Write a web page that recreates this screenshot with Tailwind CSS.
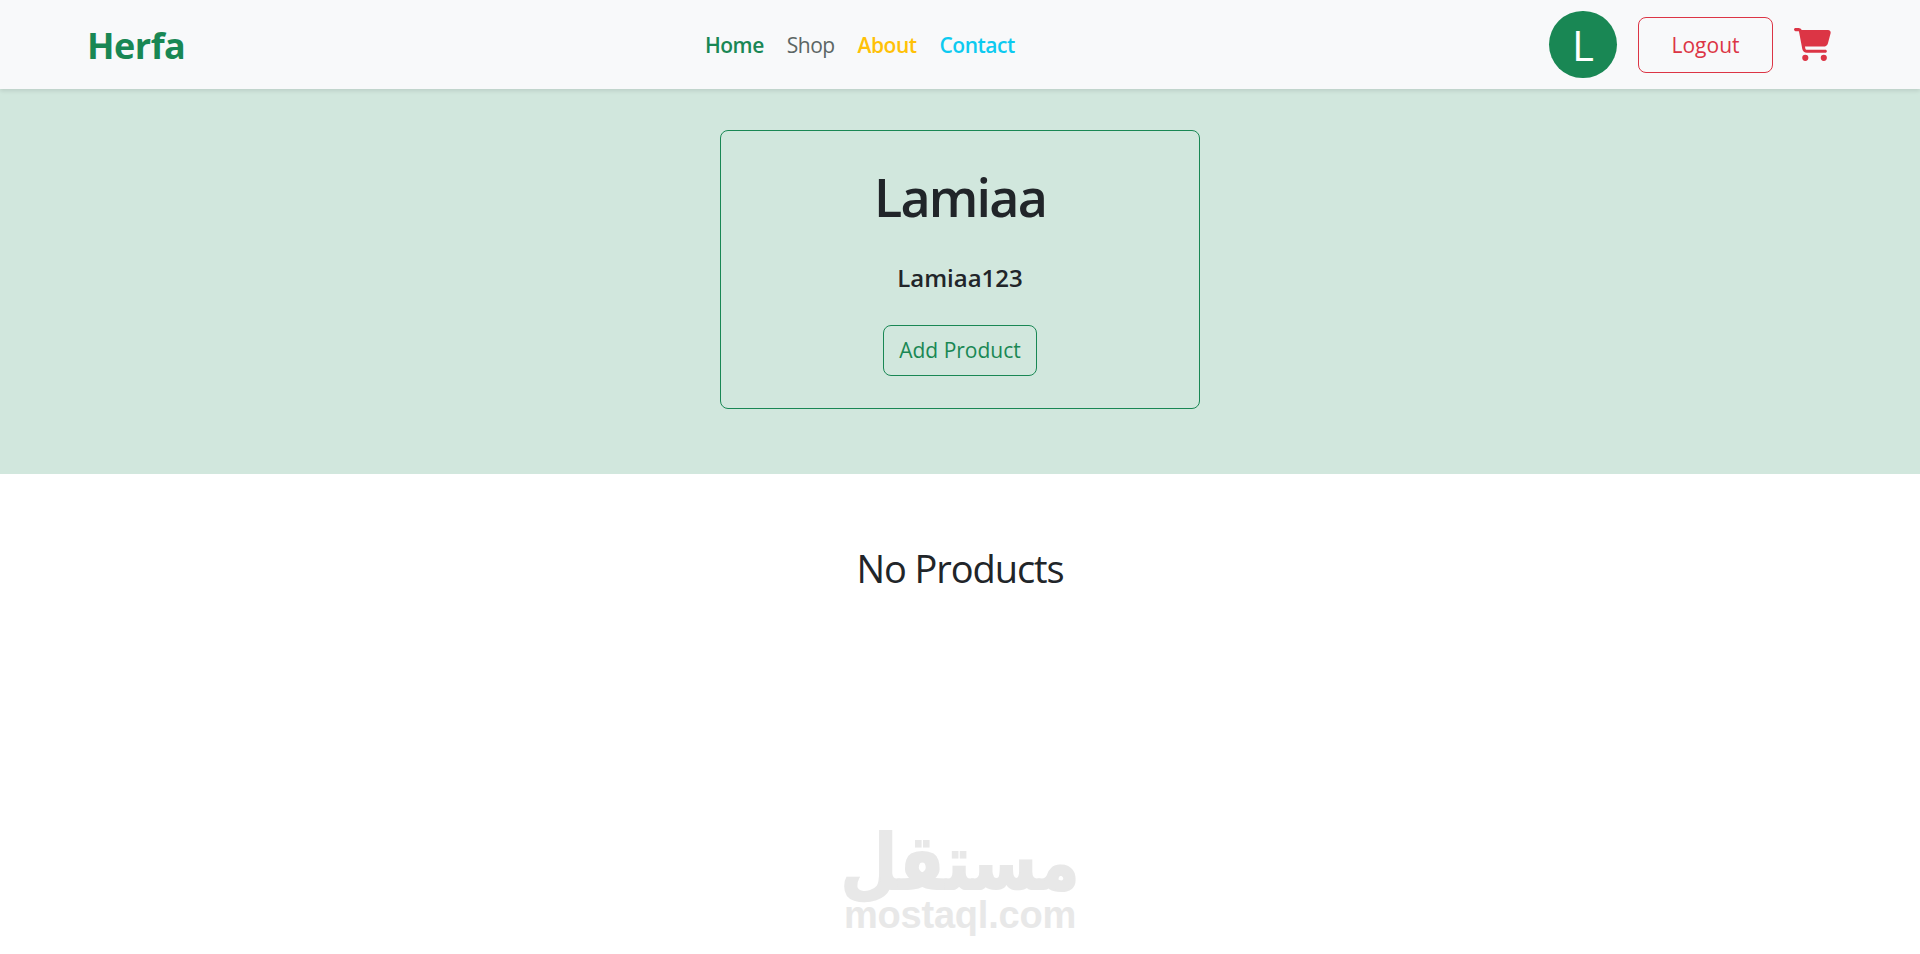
<!DOCTYPE html>
<html lang="en">
<head>
    <meta charset="UTF-8">
    <meta name="viewport" content="width=device-width, initial-scale=1.0">
    <title>Herfa</title>
    <script src="https://cdn.jsdelivr.net/npm/@tailwindcss/browser@4"></script>
</head>
<body class="bg-white font-['Open_Sans',sans-serif] text-[#212529] h-[954px] overflow-hidden relative">

    <!-- Navbar -->
    <nav class="relative z-10 flex items-center h-[89px] pl-[87px] pr-[89px] bg-[#f8f9fa] shadow-[0_2px_4px_rgba(0,0,0,0.1)]">
        <a href="#" class="w-[98px] pt-[3px] text-[36px] font-bold text-[#198754] tracking-[-0.5px]">Herfa</a>
        <div class="flex items-center gap-[23px] ml-[520px] pt-[3px] text-[21px] font-semibold tracking-[-0.5px]">
            <a href="#" class="text-[#198754]">Home</a>
            <a href="#" class="text-[#5c6664] font-medium">Shop</a>
            <a href="#" class="text-[#ffc107]">About</a>
            <a href="#" class="text-[#0dcaf0]">Contact</a>
        </div>
        <div class="flex items-center ml-auto">
            <div class="flex items-center justify-center w-[68px] h-[67px] rounded-full bg-[#198754] text-white text-[42px]">L</div>
            <button class="w-[135px] h-[56px] ml-[21px] pt-[2px] border border-[#dc3545] rounded-lg text-[#dc3545] text-[21px]">Logout</button>
            <svg class="w-[37px] h-[33px] ml-[21px] fill-[#dc3545]" viewBox="0 0 576 512"><path d="M0 24C0 10.7 10.7 0 24 0H69.5c22 0 41.5 12.8 50.6 32h411c26.3 0 45.5 25 38.6 50.4l-41 152.3c-8.5 31.4-37 53.3-69.5 53.3H170.7l5.4 28.5c2.2 11.3 12.1 19.5 23.6 19.5H488c13.3 0 24 10.7 24 24s-10.7 24-24 24H199.7c-34.6 0-64.3-24.6-70.7-58.5L77.4 54.5c-.7-3.8-4-6.5-7.9-6.5H24C10.7 48 0 37.3 0 24zM128 464a48 48 0 1 1 96 0 48 48 0 1 1 -96 0zm336-48a48 48 0 1 1 0 96 48 48 0 1 1 0-96z"/></svg>
        </div>
    </nav>

    <!-- Profile header -->
    <section class="flex justify-center h-[385px] pt-[41px] bg-[#d1e7dd]">
        <div class="flex flex-col items-center w-[480px] h-[279px] border border-[#198754] rounded-lg">
            <h1 class="mt-[32px] text-[52px] leading-[68px] font-semibold tracking-[-1.8px]">Lamiaa</h1>
            <h4 class="mt-[31px] text-[24px] leading-[32px] font-semibold">Lamiaa123</h4>
            <button class="w-[154px] h-[51px] mt-[31px] pt-[1px] border border-[#198754] rounded-lg text-[#198754] text-[21px]">Add Product</button>
        </div>
    </section>

    <!-- Products -->
    <section class="pt-[66px] text-center">
        <h2 class="text-[38px] leading-[56px] tracking-[-1.1px]">No Products</h2>
    </section>

    <!-- Watermark -->
    <div class="absolute left-[845px] top-[828px] w-[230px] flex flex-col items-center text-[#e8e8e8]">
        <span class="block font-['DejaVu_Sans',sans-serif] font-bold text-[76px] leading-[70px] scale-x-[0.86] [-webkit-text-stroke:2px_#e8e8e8]" lang="ar" dir="rtl">مستقل</span>
        <span class="block font-['Liberation_Sans',sans-serif] font-bold text-[38px] leading-[34px] tracking-[-0.2px]">mostaql.com</span>
    </div>

</body>
</html>
